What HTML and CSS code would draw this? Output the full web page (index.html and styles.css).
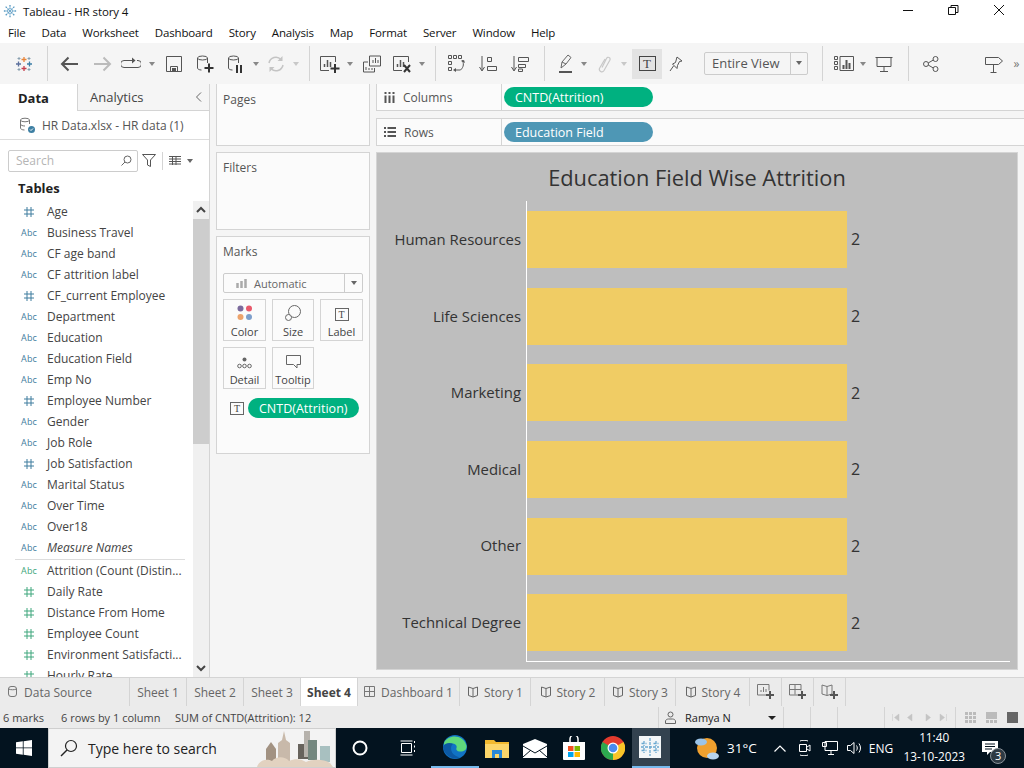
FILE: index.html
```html
<!DOCTYPE html>
<html lang="en">
<head>
    <meta charset="UTF-8">
    <title>Tableau - HR story 4</title>
    <link rel="stylesheet" href="styles.css">
</head>
<body>
    <svg class="defs" width="0" height="0">
        <symbol id="hash" viewBox="0 0 10 10"><path d="M3 0v10M7 0v10M0 3h10M0 7h10" fill="none" stroke="currentColor" stroke-width="1"/></symbol>
        <symbol id="book" viewBox="0 0 12 12"><path d="M6 2.5 1.5 1v8.5L6 11l4.5-1.5V1zM6 2.5V11" fill="none" stroke="currentColor"/></symbol>
    </svg>

    <!-- Title bar -->
    <div class="titlebar">
        <svg class="app-logo" width="14" height="14" viewBox="0 0 16 16"><path d="M8 1v14M1 8h14M3 3l10 10M13 3 3 13" stroke="#5b9cc4" stroke-width="1.5" stroke-dasharray="2 1"/></svg>
        <span class="app-title">Tableau - HR story 4</span>
        <div class="win-btns">
            <svg width="46" height="22" viewBox="0 0 46 22"><path d="M17 10.5h10" stroke="#111"/></svg>
            <svg width="46" height="22" viewBox="0 0 46 22"><path d="M16.5 7.5h7v7h-7zM19 7.5v-2h7v7h-2.500" fill="none" stroke="#111"/></svg>
            <svg width="46" height="22" viewBox="0 0 46 22"><path d="M16 5l10 10M26 5 16 15" stroke="#111"/></svg>
        </div>
    </div>

    <!-- Menu -->
    <div class="menubar">
        <span>File</span><span>Data</span><span>Worksheet</span><span>Dashboard</span><span>Story</span><span>Analysis</span><span>Map</span><span>Format</span><span>Server</span><span>Window</span><span>Help</span>
    </div>

    <!-- Toolbar -->
    <div class="toolbar">
        <div class="tool t32"><svg width="18" height="18" viewBox="0 0 18 18"><path d="M9 2v5M6.5 4.5h5" stroke="#e8853a" stroke-width="1.3"/><path d="M9 11v5M6.5 13.5h5" stroke="#c63f4d" stroke-width="1.3"/><path d="M3.5 6.500v5M1 9h5" stroke="#5b6f9c" stroke-width="1.3"/><path d="M14.500 6.500v5M12 9h5" stroke="#3c7ea6" stroke-width="1.3"/><path d="M4 2v3M2.5 3.500h3M14 2v3M12.500 3.500h3M4 13v3M2.500 14.500h3M14 13v3M12.500 14.500h3" stroke="#8aa0b0"/></svg></div>
        <div class="tool t14"><i class="sep"></i></div>
        <div class="tool t32"><svg width="20" height="16" viewBox="0 0 20 16"><path d="M18 8H2M8.5 1.5 2 8l6.5 6.5" fill="none" stroke="#555" stroke-width="2"/></svg></div>
        <div class="tool t32"><svg width="20" height="16" viewBox="0 0 20 16"><path d="M2 8h16M11.500 1.500 18 8l-6.500 6.500" fill="none" stroke="#bbb" stroke-width="2"/></svg></div>
        <div class="tool t26"><svg width="20" height="14" viewBox="0 0 20 14"><path d="M12 3.500H3a2.500 2.500 0 0 0 0 7h14a2.500 2.500 0 0 0 0-7h-1" fill="none" stroke="#555"/><path d="M11 .5 14.500 3.500 11 6.500z" fill="#555"/></svg></div>
        <div class="tool t16"><i class="caret"></i></div>
        <div class="tool t28"><svg width="16" height="16" viewBox="0 0 16 16"><path d="M.5.5h15v15H.5zM4.500 15.500v-5h7v5" fill="none" stroke="#555"/><path d="M6 12h4v3H6z" fill="#555"/></svg></div>
        <div class="tool t34"><svg width="18" height="18" viewBox="0 0 18 18"><ellipse cx="6.500" cy="3" rx="5" ry="2" fill="none" stroke="#555"/><path d="M1.500 3v10c0 1 1.500 2 4 2M11.500 3v5" fill="none" stroke="#555"/><path d="M13 8.500v9M8.500 13h9" stroke="#333" stroke-width="2"/></svg></div>
        <div class="tool t28"><svg width="18" height="18" viewBox="0 0 18 18"><ellipse cx="6.500" cy="3" rx="5" ry="2" fill="none" stroke="#555"/><path d="M1.500 3v10c0 1 1.500 2 4 2M11.500 3v5" fill="none" stroke="#555"/><path d="M9 10h2v8H9zM13 10h2v8h-2z" fill="#333"/></svg></div>
        <div class="tool t12"><i class="caret"></i></div>
        <div class="tool t28"><svg width="18" height="18" viewBox="0 0 18 18"><path d="M2 8a7 7 0 0 1 12-3.500M16 10a7 7 0 0 1-12 3.500" fill="none" stroke="#c4c4c4" stroke-width="1.5"/><path d="M15.500 1v5h-5zM2.500 17v-5h5z" fill="#c4c4c4"/></svg></div>
        <div class="tool t12"><i class="caret off"></i></div>
        <div class="tool t14"><i class="sep"></i></div>
        <div class="tool t28"><svg width="20" height="18" viewBox="0 0 20 18"><path d="M15.500 7V1.500H.5v14H9" fill="none" stroke="#555"/><path d="M4.500 12V9M7.500 12V5M10.500 12V7" stroke="#555" stroke-width="1.5"/><path d="M15 9v9M10.500 13.500h9" stroke="#333" stroke-width="2"/></svg></div>
        <div class="tool t12"><i class="caret"></i></div>
        <div class="tool t32"><svg width="18" height="18" viewBox="0 0 18 18"><path d="M6.500 1h11v10h-11zM.5 7H5M.5 7v10h11v-4" fill="none" stroke="#555"/><path d="M10 8V5M12.500 8V3M15 8V5M3 15v-3M6 15v-2M9 15v-2" stroke="#555"/></svg></div>
        <div class="tool t28"><svg width="18" height="18" viewBox="0 0 18 18"><path d="M15.500 7V1.500H.5v14H9" fill="none" stroke="#555"/><path d="M4.500 12V9M7.500 12V5M10.500 12V7" stroke="#555" stroke-width="1.5"/><path d="M11 10l6 7M17 10l-6 7" stroke="#333" stroke-width="2"/></svg></div>
        <div class="tool t12"><i class="caret"></i></div>
        <div class="tool t14"><i class="sep"></i></div>
        <div class="tool t30"><svg width="18" height="18" viewBox="0 0 18 18"><path d="M.5.5h3v3h-3zM5.500.5h3v3h-3zM10.500.5h3v3h-3zM.5 6.500h3v3h-3zM.5 12.500h3v3h-3zM14 5c2 3 2 7-1.500 10H7" fill="none" stroke="#555"/><path d="M8 13v4l-3-2zM13 6l3-1 1 3z" fill="#555"/></svg></div>
        <div class="tool t32"><svg width="18" height="16" viewBox="0 0 18 16"><path d="M3 0v14M.5 11 3 15l2.500-4" fill="none" stroke="#555"/><path d="M8.500 1.500h4v4h-4zM8.500 10.500h9v4h-9z" fill="none" stroke="#555"/></svg></div>
        <div class="tool t32"><svg width="18" height="16" viewBox="0 0 18 16"><path d="M3 0v14M.5 11 3 15l2.500-4" fill="none" stroke="#555"/><path d="M7.500 1.500h10v4h-10zM7.500 8.500h7v3h-7zM7.500 13h4v2.500h-4z" fill="none" stroke="#555"/></svg></div>
        <div class="tool t16"><i class="sep"></i></div>
        <div class="tool t28"><svg width="14" height="20" viewBox="0 0 14 20"><path d="M2 14 3 8 9 1l3 2.500L7 10l-5 4M3 8l4 2" fill="none" stroke="#666"/><path d="M0 18h13" stroke="#555" stroke-width="2"/></svg></div>
        <div class="tool t8"><i class="caret"></i></div>
        <div class="tool t32"><svg width="13" height="18" viewBox="0 0 13 18"><path d="M4 12.500 8.500 3.500c1.200-2.500 4.500-.8 3.300 1.700L6 15.500c-1.700 2.800-6 .5-4.300-2.500L7 4" fill="none" stroke="#c8c8c8" stroke-width="1.2"/></svg></div>
        <div class="tool t8"><i class="caret off"></i></div>
        <div class="tool t30 tool-on"><span class="t-box t-big">T</span></div>
        <div class="tool t28"><svg width="14" height="16" viewBox="0 0 14 16"><path d="M8 1l5 4-2.500.5-2 4-.5 3L3.500 8l3-1.500zM4.500 10 1 15" fill="none" stroke="#555"/></svg></div>
        <div class="view-select"><span class="view-label">Entire View</span><span class="view-arrow"><i class="caret dark"></i></span></div>
        <div class="tool t14"><i class="sep"></i></div>
        <div class="tool t30"><svg width="20" height="15" viewBox="0 0 20 15"><path d="M.5.5h3v3h-3zM.5 5.500h3v3h-3zM.5 10.500h3v3h-3zM6 .5h13.500v14H6z" fill="none" stroke="#555"/><path d="M9.500 13V9M12.500 13V4M15.500 13V7" stroke="#555" stroke-width="2"/></svg></div>
        <div class="tool t8"><i class="caret"></i></div>
        <div class="tool t34"><svg width="18" height="16" viewBox="0 0 18 16"><path d="M.5 1.500h17M2 1.500v9h14v-9M9 10.500V15M5 15.500h8" fill="none" stroke="#555"/></svg></div>
        <div class="tool t14"><i class="sep"></i></div>
        <div class="tool t32"><svg width="16" height="16" viewBox="0 0 16 16"><circle cx="3" cy="8" r="2.500" fill="none" stroke="#555"/><circle cx="12.500" cy="3" r="2.500" fill="none" stroke="#555"/><circle cx="12.500" cy="13" r="2.500" fill="none" stroke="#555"/><path d="M5.200 7 10.300 4M5.200 9l5.100 3" stroke="#555"/></svg></div>
        <div class="tool t32 push"><svg width="18" height="18" viewBox="0 0 18 18"><path d="M.5 2.500h13l4 3.500-4 3.500H.5zM8.500 9.500V17M5.500 17.500h6" fill="none" stroke="#555"/></svg></div>
        <span class="more">&raquo;</span>
    </div>

    <!-- Main area -->
    <div class="main">
        <div class="data-pane">
            <div class="pane-tabs">
                <div class="pane-tab active">Data</div>
                <div class="pane-tab">Analytics<svg class="collapse" width="7" height="10" viewBox="0 0 7 10"><path d="M6 .5 1.500 5 6 9.500" fill="none" stroke="#666"/></svg></div>
            </div>
            <div class="source">
                <svg width="17" height="17" viewBox="0 0 17 17"><ellipse cx="6" cy="3" rx="4.500" ry="1.800" fill="none" stroke="#777"/><path d="M1.500 3v8c0 1 1.500 2 4 2M10.500 3v4M1.500 7c0 1.200 2 2 4.500 2" fill="none" stroke="#777"/><circle cx="12.500" cy="12.500" r="3.500" fill="#3d7fa3"/><path d="M11 12.500l1 1 2-2" fill="none" stroke="#fff"/></svg>
                <span>HR Data.xlsx - HR data (1)</span>
            </div>
            <div class="search-row">
                <div class="search"><span>Search</span><svg width="11" height="11" viewBox="0 0 11 11"><circle cx="6.500" cy="4.500" r="3.500" fill="none" stroke="#666"/><path d="M4 7 .5 10.500" stroke="#666"/></svg></div>
                <svg class="filter" width="14" height="13" viewBox="0 0 14 13"><path d="M.5.5h13L8.500 6v6.500l-3-1.500V6z" fill="none" stroke="#555"/></svg>
                <i class="search-sep"></i>
                <svg width="12" height="9" viewBox="0 0 12 9"><path d="M0 .5h12M0 3h12M0 5.500h12M0 8h12M3.500 0v9M7 0v9" stroke="#555"/></svg>
                <i class="caret dark list-caret"></i>
            </div>
            <div class="tables-head">Tables</div>
            <div class="field-area">
                <div class="fields">
                    <div class="field"><span class="ico blue"><svg width="10" height="10"><use href="#hash"/></svg></span>Age</div>
                    <div class="field"><span class="ico blue">Abc</span>Business Travel</div>
                    <div class="field"><span class="ico blue">Abc</span>CF age band</div>
                    <div class="field"><span class="ico blue">Abc</span>CF attrition label</div>
                    <div class="field"><span class="ico blue"><svg width="10" height="10"><use href="#hash"/></svg></span>CF_current Employee</div>
                    <div class="field"><span class="ico blue">Abc</span>Department</div>
                    <div class="field"><span class="ico blue">Abc</span>Education</div>
                    <div class="field"><span class="ico blue">Abc</span>Education Field</div>
                    <div class="field"><span class="ico blue">Abc</span>Emp No</div>
                    <div class="field"><span class="ico blue"><svg width="10" height="10"><use href="#hash"/></svg></span>Employee Number</div>
                    <div class="field"><span class="ico blue">Abc</span>Gender</div>
                    <div class="field"><span class="ico blue">Abc</span>Job Role</div>
                    <div class="field"><span class="ico blue"><svg width="10" height="10"><use href="#hash"/></svg></span>Job Satisfaction</div>
                    <div class="field"><span class="ico blue">Abc</span>Marital Status</div>
                    <div class="field"><span class="ico blue">Abc</span>Over Time</div>
                    <div class="field"><span class="ico blue">Abc</span>Over18</div>
                    <div class="field"><span class="ico blue">Abc</span><em>Measure Names</em></div>
                    <div class="field-rule"></div>
                    <div class="field"><span class="ico green">Abc</span>Attrition (Count (Distin...</div>
                    <div class="field"><span class="ico green"><svg width="10" height="10"><use href="#hash"/></svg></span>Daily Rate</div>
                    <div class="field"><span class="ico green"><svg width="10" height="10"><use href="#hash"/></svg></span>Distance From Home</div>
                    <div class="field"><span class="ico green"><svg width="10" height="10"><use href="#hash"/></svg></span>Employee Count</div>
                    <div class="field"><span class="ico green"><svg width="10" height="10"><use href="#hash"/></svg></span>Environment Satisfacti...</div>
                    <div class="field"><span class="ico green"><svg width="10" height="10"><use href="#hash"/></svg></span>Hourly Rate</div>
                </div>
                <div class="scrollbar">
                    <svg class="scroll-arrow" width="16" height="18" viewBox="0 0 16 18"><path d="M4 11l4-4 4 4" fill="none" stroke="#444" stroke-width="2"/></svg>
                    <div class="scroll-thumb"></div>
                    <svg class="scroll-arrow end" width="16" height="18" viewBox="0 0 16 18"><path d="M4 7l4 4 4-4" fill="none" stroke="#444" stroke-width="2"/></svg>
                </div>
            </div>
        </div>

        <div class="cards">
            <div class="card pages">Pages</div>
            <div class="card filters">Filters</div>
            <div class="card marks">
                <div class="marks-title">Marks</div>
                <div class="mark-select">
                    <svg width="12" height="10" viewBox="0 0 12 10"><path d="M1.500 10V5M5.500 10V3M9.500 10V1" stroke="#aaa" stroke-width="2.5"/></svg>
                    <span>Automatic</span>
                    <span class="mark-arrow"><i class="caret dark"></i></span>
                </div>
                <div class="mark-grid">
                    <div class="mark-btn"><svg width="16" height="16" viewBox="0 0 16 16"><circle cx="3.500" cy="3.500" r="3" fill="#7b6a9c"/><circle cx="12" cy="3.500" r="3" fill="#e8596b"/><circle cx="3.500" cy="12" r="3" fill="#eda36c"/><circle cx="12" cy="12" r="3" fill="#7d9fcb"/></svg><span>Color</span></div>
                    <div class="mark-btn"><svg width="16" height="16" viewBox="0 0 16 16"><circle cx="9.500" cy="6.500" r="6" fill="none" stroke="#666"/><circle cx="3.500" cy="12.500" r="3" fill="#fbfbfb" stroke="#666"/></svg><span>Size</span></div>
                    <div class="mark-btn"><span class="t-box">T</span><span>Label</span></div>
                    <div class="mark-btn"><svg width="15" height="12" viewBox="0 0 15 12"><circle cx="7.500" cy="2.500" r="2" fill="#666"/><circle cx="2.500" cy="9" r="1.800" fill="none" stroke="#666"/><circle cx="7.500" cy="9" r="1.800" fill="none" stroke="#666"/><circle cx="12.500" cy="9" r="1.800" fill="none" stroke="#666"/></svg><span>Detail</span></div>
                    <div class="mark-btn"><svg width="15" height="14" viewBox="0 0 15 14"><path d="M.5.5h14v9h-3.500v3.500L7.500 9.500H.5z" fill="none" stroke="#666"/></svg><span>Tooltip</span></div>
                </div>
                <div class="mark-pill-row">
                    <span class="t-box">T</span>
                    <span class="pill green-pill">CNTD(Attrition)</span>
                </div>
            </div>
        </div>

        <div class="sheet">
            <div class="shelf">
                <div class="shelf-name"><svg width="11" height="11" viewBox="0 0 11 11"><path d="M1.500 0v2M5.500 0v2M9.500 0v2M1.500 3.500V11M5.500 3.500V11M9.500 3.500V11" stroke="#555" stroke-width="2"/></svg>Columns</div>
                <div class="shelf-body"><span class="pill green-pill wide">CNTD(Attrition)</span></div>
            </div>
            <div class="shelf">
                <div class="shelf-name"><svg width="12" height="10" viewBox="0 0 12 10"><path d="M0 1h2M3.500 1H12M0 5h2M3.500 5H12M0 9h2M3.500 9H12" stroke="#555" stroke-width="2"/></svg>Rows</div>
                <div class="shelf-body"><span class="pill blue-pill wide">Education Field</span></div>
            </div>
            <div class="viz">
                <h1>Education Field Wise Attrition</h1>
                <div class="chart">
                    <div class="labels">
                        <div>Human Resources</div>
                        <div>Life Sciences</div>
                        <div>Marketing</div>
                        <div>Medical</div>
                        <div>Other</div>
                        <div>Technical Degree</div>
                    </div>
                    <div class="plot">
                        <div class="row"><div class="bar"></div><span>2</span></div>
                        <div class="row"><div class="bar"></div><span>2</span></div>
                        <div class="row"><div class="bar"></div><span>2</span></div>
                        <div class="row"><div class="bar"></div><span>2</span></div>
                        <div class="row"><div class="bar"></div><span>2</span></div>
                        <div class="row"><div class="bar"></div><span>2</span></div>
                    </div>
                </div>
            </div>
        </div>
    </div>

    <!-- Sheet tabs -->
    <div class="tabs">
        <div class="tab tab-source"><svg width="10" height="12" viewBox="0 0 10 12"><rect x=".5" y=".5" width="8" height="10" rx="2.500" fill="none" stroke="#777"/><path d="M.5 3c2 1 6 1 8 0" fill="none" stroke="#777"/></svg>Data Source</div>
        <div class="tab tab-sheet">Sheet 1</div>
        <div class="tab tab-sheet">Sheet 2</div>
        <div class="tab tab-sheet">Sheet 3</div>
        <div class="tab tab-sheet current">Sheet 4</div>
        <div class="tab tab-dash"><svg width="12" height="12" viewBox="0 0 12 12"><path d="M.5.5h10v10H.5zM.5 5.500h10M5.500.5v10" fill="none" stroke="#777"/></svg>Dashboard 1</div>
        <div class="tab tab-story"><svg width="12" height="12"><use href="#book"/></svg>Story 1</div>
        <div class="tab tab-story wide-story"><svg width="12" height="12"><use href="#book"/></svg>Story 2</div>
        <div class="tab tab-story"><svg width="12" height="12"><use href="#book"/></svg>Story 3</div>
        <div class="tab tab-story wide-story"><svg width="12" height="12"><use href="#book"/></svg>Story 4</div>
        <div class="tab tab-new"><svg width="18" height="16" viewBox="0 0 18 16"><path d="M10 11H.5V.5H12v6" fill="none" stroke="#777"/><path d="M4 8V6M6.500 8V3M9 8V5" stroke="#777"/><path d="M13 7v8M9 11h8" stroke="#555" stroke-width="2"/></svg></div>
        <div class="tab tab-new"><svg width="18" height="16" viewBox="0 0 18 16"><path d="M10 11H.5V.5H12v6M.5 5.500H12M6 .5v10" fill="none" stroke="#777"/><path d="M13 7v8M9 11h8" stroke="#555" stroke-width="2"/></svg></div>
        <div class="tab tab-new"><svg width="18" height="16" viewBox="0 0 18 16"><path d="M6 2.500 1 1v9l5 1.500L11 10V1zM6 2.500v9" fill="none" stroke="#777"/><path d="M13 7v8M9 11h8" stroke="#555" stroke-width="2"/></svg></div>
    </div>

    <!-- Status bar -->
    <div class="status">
        <span class="status-marks">6 marks</span>
        <span class="status-rows">6 rows by 1 column</span>
        <span>SUM of CNTD(Attrition): 12</span>
        <div class="status-user">
            <svg width="11" height="13" viewBox="0 0 11 13"><circle cx="5.500" cy="3.500" r="2.500" fill="none" stroke="#666"/><path d="M.5 12.500V10c0-1 1.500-2 3-2h4c1.500 0 3 1 3 2v2.500z" fill="none" stroke="#666"/></svg>
            <span>Ramya N</span>
            <i class="caret black"></i>
        </div>
        <div class="status-cell c27"></div>
        <div class="status-cell c27"></div>
        <div class="status-cell c47"></div>
        <div class="status-cell nav">
            <svg width="56" height="9" viewBox="0 0 56 9"><path d="M.5 1v7M7 1 2.500 4.500 7 8zM20 1l-4.500 3.500L20 8zM34 1l4.500 3.500L34 8zM48 1l4.500 3.500L48 8zM54.500 1v7" fill="#c4c4c4" stroke="#c4c4c4" stroke-width=".5"/></svg>
        </div>
        <div class="status-views">
            <svg width="11" height="11" viewBox="0 0 11 11"><path d="M0 0h3v3H0zM4 0h3v3H4zM8 0h3v3H8zM0 4h3v3H0zM4 4h3v3H4zM8 4h3v3H8zM0 8h3v3H0zM4 8h3v3H4zM8 8h3v3H8z" fill="#bbb"/></svg>
            <svg width="11" height="11" viewBox="0 0 11 11"><path d="M0 0h11v7H0zM0 8h3v3H0zM4 8h3v3H4zM8 8h3v3H8z" fill="#bbb"/></svg>
            <svg width="11" height="11" viewBox="0 0 11 11"><path d="M0 0h11v11H0z" fill="#666"/></svg>
        </div>
    </div>

    <!-- Windows taskbar -->
    <div class="taskbar">
        <div class="start"><svg width="16" height="16" viewBox="0 0 16 16"><path d="M0 2.300 6.800 1.300v6.200H0zM7.600 1.200 16 0v7.500H7.600zM0 8.300h6.800v6.400L0 13.700zM7.600 8.300H16V16l-8.400-1.200z" fill="#fff"/></svg></div>
        <div class="winsearch">
            <svg width="18" height="18" viewBox="0 0 18 18"><circle cx="11" cy="7" r="5.500" fill="none" stroke="#222" stroke-width="1.2"/><path d="M7 11 1 17" stroke="#222" stroke-width="1.5"/></svg>
            <span>Type here to search</span>
            <svg class="city" width="80" height="38" viewBox="0 0 80 38"><path d="M11 20l5-7 5 7v18H11z" fill="#a29282"/><path d="M23 14l4-3 2-9 2 9 4 3v24H23z" fill="#c8b9aa"/><path d="M43 15h10v15H43z" fill="#67635d"/><path d="M49 2h6v26h-6z" fill="#b6b2ac"/><path d="M53 11h9v20h-9z" fill="#74877f"/><path d="M65 17h10v16H65z" fill="#a8c0c0"/><path d="M2 38c2-7 10-9 15-6 4-5 13-5 17 0 6-3 13-2 17 1 6-3 18-3 24 1l3 4z" fill="#e2d2c0"/></svg>
        </div>
        <div class="tb-icon w48"><svg width="16" height="16" viewBox="0 0 16 16"><circle cx="8" cy="8" r="6.500" fill="none" stroke="#fff" stroke-width="2"/></svg></div>
        <div class="tb-icon w47"><svg width="16" height="16" viewBox="0 0 16 16"><path d="M1.500 3.500h10v9h-10zM.5 1h12M.5 15h12M14.500 1v2M14.500 5.500v2M14.500 10v2" fill="none" stroke="#fff"/></svg></div>
        <div class="tb-icon w48 running">
            <svg width="24" height="24" viewBox="0 0 24 24"><circle cx="12" cy="12" r="12" fill="#1173c5"/><path d="M1 8C4 0 20-2 23.500 11c.5 4-3 6-7 5.500-3-.5-3.500-2-3-3.500 1-3-2-5-5-4.500C5 9 2 12 2 15z" fill="#5fd97c"/><path d="M0 12c1-4 7-5 10-3-3 2-3 9 3 12 1 .5 2 1 4 1-6 4-16-1-17-10z" fill="#0c59a4"/></svg>
        </div>
        <div class="tb-icon w36"><svg width="24" height="20" viewBox="0 0 24 20"><path d="M0 2h9l2 2h13v16H0z" fill="#f2b92f"/><path d="M0 6h24v14H0z" fill="#fcd66a"/><path d="M7 12h10v8h-3v-4h-4v4H7z" fill="#2a88d8"/></svg></div>
        <div class="tb-icon w39"><svg width="24" height="19" viewBox="0 0 24 19"><path d="M0 5 12 0l12 5v14H0z" fill="#fff"/><path d="M0 7l12 7 12-7M0 18l8-7M24 18l-8-7" fill="none" stroke="#03131f"/></svg></div>
        <div class="tb-icon w39"><svg width="24" height="24" viewBox="0 0 24 24"><path d="M1 6h22v17a1 1 0 0 1-1 1H2a1 1 0 0 1-1-1z" fill="#fff"/><path d="M8 6V3a4 4 0 0 1 8 0v3" fill="none" stroke="#fff" stroke-width="1.5"/><path d="M6 10h5.500v5H6z" fill="#f25022"/><path d="M12.500 10H18v5h-5.500z" fill="#7fba00"/><path d="M6 16h5.500v5H6z" fill="#00a4ef"/><path d="M12.500 16H18v5h-5.500z" fill="#ffb900"/></svg></div>
        <div class="tb-icon w39"><svg width="24" height="24" viewBox="0 0 24 24"><circle cx="12" cy="12" r="12" fill="#e33b2e"/><path d="M12 12 22.500 6A12 12 0 0 1 12 24z" fill="#f8c528"/><path d="M12 12 12 24A12 12 0 0 1 1.500 6z" fill="#2da94f"/><circle cx="12" cy="12" r="5.500" fill="#fff"/><circle cx="12" cy="12" r="4.300" fill="#4a8bf0"/></svg></div>
        <div class="tb-icon w38 active-app"><div class="tile"><svg width="20" height="20" viewBox="0 0 20 20"><path d="M10 1v18M1 10h18M4 4v5M1.500 6.500h5M16 4v5M13.500 6.500h5M4 11v5M1.500 13.500h5M16 11v5M13.500 13.500h5" stroke="#6aa8d0" stroke-width="1.3" stroke-dasharray="3 1"/></svg></div></div>
        <div class="tray">
            <svg class="weather" width="26" height="24" viewBox="0 0 26 24"><circle cx="13" cy="12" r="10" fill="#f0a02e"/><ellipse cx="7" cy="6" rx="6" ry="3.500" fill="#9cc4e8"/><ellipse cx="19" cy="20" rx="6" ry="3.500" fill="#b8d4ee"/></svg>
            <span class="temp">31°C</span>
            <svg class="tray-ico chev" width="12" height="7" viewBox="0 0 12 7"><path d="M.5 6.500 6 1l5.500 5.500" fill="none" stroke="#fff" stroke-width="1.2"/></svg>
            <svg class="tray-ico meet" width="12" height="16" viewBox="0 0 12 16"><path d="M1 1c2-1 6-1 8 0M1 15c2 1 6 1 8 0M.5 4.500h7v7h-7zM8 7l3-2v6L8 9" fill="none" stroke="#fff"/></svg>
            <svg class="tray-ico net" width="16" height="14" viewBox="0 0 16 14"><path d="M3 .5h12.500v9H3zM9 9.500V13M6 13.500h6M.5 1.500h4v4h-4z" fill="#03131f" stroke="#fff"/></svg>
            <svg class="tray-ico vol" width="16" height="14" viewBox="0 0 16 14"><path d="M.5 4.500h3L7 1.500v11l-3.500-3h-3zM9.500 4.500c1 1.500 1 3.500 0 5M12 2.500c2 3 2 6 0 9" fill="none" stroke="#fff"/></svg>
            <span class="lang">ENG</span>
            <div class="clock"><div>11:40</div><div>13-10-2023</div></div>
            <div class="notif">
                <svg width="16" height="14" viewBox="0 0 16 14"><path d="M0 0h16v11H8l-3 3v-3H0z" fill="#fff"/><path d="M3 3h10M3 5.500h10M3 8h7" stroke="#03131f"/></svg>
                <span class="badge">3</span>
            </div>
        </div>
    </div>
</body>
</html>
```

FILE: styles.css
```css
* {
    box-sizing: border-box;
}
html, body {
    margin: 0;
    padding: 0;
}
body {
    width: 1024px;
    height: 768px;
    overflow: hidden;
    font-family: "Open Sans", sans-serif;
    font-size: 12px;
    color: #333;
    background-color: #fff;
    display: flex;
    flex-direction: column;
}
.defs {
    position: absolute;
}
svg {
    display: block;
    flex: none;
}

/* Title bar + menu */
.titlebar {
    height: 22px;
    display: flex;
    align-items: center;
    padding-left: 2px;
    flex: none;
}
.app-logo {
    margin-left: 1px;
}
.app-title {
    margin-left: 6px;
    color: #111;
    font-size: 11.5px;
    letter-spacing: -.1px;
}
.win-btns {
    display: flex;
    margin-left: auto;
}
.menubar {
    height: 21px;
    display: flex;
    gap: 16px;
    align-items: center;
    padding-left: 8px;
    font-size: 11.5px;
    letter-spacing: -.15px;
    color: #111;
    flex: none;
}

/* Toolbar */
.toolbar {
    height: 41px;
    display: flex;
    align-items: center;
    background-color: #f5f5f5;
    padding-left: 8px;
    flex: none;
}
.tool {
    height: 30px;
    display: flex;
    align-items: center;
    justify-content: center;
    flex: none;
}
.t8 { width: 8px; }
.t12 { width: 12px; }
.t14 { width: 14px; }
.t16 { width: 16px; }
.t26 { width: 26px; }
.t28 { width: 28px; }
.t30 { width: 30px; }
.t32 { width: 32px; }
.t34 { width: 34px; }
.push {
    margin-left: 31px;
}
.tool-on {
    background-color: #e3e3e3;
    margin-left: 4px;
}
.sep {
    display: block;
    width: 1px;
    height: 35px;
    background-color: #d4d4d4;
}
.caret {
    display: block;
    width: 0;
    height: 0;
    border-left: 3.5px solid transparent;
    border-right: 3.5px solid transparent;
    border-top: 4px solid #888;
}
.caret.off {
    border-top-color: #c8c8c8;
}
.caret.dark {
    border-top-color: #666;
}
.caret.black {
    border-left-width: 4px;
    border-right-width: 4px;
    border-top-color: #222;
}
.t-box {
    display: flex;
    align-items: center;
    justify-content: center;
    width: 14px;
    height: 13px;
    border: 1px solid #666;
    font-family: "Liberation Serif", serif;
    font-size: 10px;
    color: #444;
    flex: none;
}
.t-big {
    width: 17px;
    height: 15px;
    border-color: #444;
    font-size: 13px;
}
.view-select {
    display: flex;
    width: 104px;
    height: 23px;
    margin-left: 14px;
    margin-right: 7px;
    margin-top: -1px;
    border: 1px solid #ccc;
    border-radius: 2px;
    align-items: center;
    font-size: 13px;
    color: #555;
    flex: none;
}
.view-label {
    width: 85px;
    padding-left: 7px;
}
.view-arrow {
    height: 100%;
    flex: 1;
    border-left: 1px solid #ccc;
    display: flex;
    align-items: center;
    justify-content: center;
}
.more {
    width: 13px;
    text-align: center;
    color: #777;
    font-size: 12px;
}

/* Main area */
.main {
    height: 593px;
    display: flex;
    background-color: #f5f5f5;
    flex: none;
}
.data-pane {
    width: 210px;
    background-color: #fff;
    border-right: 1px solid #d4d4d4;
    display: flex;
    flex-direction: column;
    flex: none;
}
.pane-tabs {
    height: 27px;
    display: flex;
    flex: none;
}
.pane-tab {
    height: 27px;
    display: flex;
    align-items: center;
    font-size: 13px;
    color: #444;
    background-color: #f5f5f5;
    border-bottom: 1px solid #d4d4d4;
    border-left: 1px solid #d4d4d4;
    padding-left: 12px;
    flex: 1;
}
.pane-tab.active {
    flex: 0 0 77px;
    padding-left: 18px;
    font-weight: 700;
    color: #222;
    background-color: #fff;
    border: none;
}
.collapse {
    margin-left: auto;
    margin-right: 7px;
}
.source {
    height: 29px;
    display: flex;
    align-items: center;
    gap: 6px;
    padding-left: 19px;
    color: #555;
    border-bottom: 1px solid #ddd;
    flex: none;
}
.search-row {
    height: 41px;
    display: flex;
    align-items: center;
    padding: 0 0 0 8px;
    flex: none;
}
.search {
    width: 130px;
    height: 22px;
    border: 1px solid #ccc;
    border-radius: 2px;
    display: flex;
    align-items: center;
    justify-content: space-between;
    padding: 0 5px 0 7px;
    color: #b5b5b5;
}
.filter {
    margin-left: 4px;
}
.search-sep {
    display: block;
    width: 1px;
    height: 18px;
    background-color: #d4d4d4;
    margin: 0 6px;
}
.list-caret {
    margin-left: 6px;
}
.tables-head {
    height: 22px;
    padding: 0 0 4px 18px;
    margin-top: -2px;
    font-weight: 700;
    font-size: 13px;
    color: #222;
    flex: none;
}
.field-area {
    flex: 1;
    display: flex;
    min-height: 0;
    overflow: hidden;
}
.fields {
    flex: 1;
    overflow: hidden;
    padding-left: 15px;
}
.field {
    height: 21px;
    display: flex;
    align-items: center;
    white-space: nowrap;
    color: #444;
}
.field em {
    color: #444;
}
.ico {
    width: 32px;
    flex: none;
    padding-left: 6px;
    font-size: 9px;
    letter-spacing: .2px;
    display: flex;
    align-items: center;
}
.ico svg {
    margin-left: 3px;
}
.blue {
    color: #3f7d9e;
}
.green {
    color: #3ea67c;
}
.field-rule {
    height: 1px;
    background-color: #ddd;
    margin: 1px 8px 0 0;
}
.scrollbar {
    width: 16px;
    background-color: #f0f0f0;
    display: flex;
    flex-direction: column;
    flex: none;
}
.scroll-arrow {
    flex: none;
}
.scroll-arrow.end {
    margin-top: auto;
}
.scroll-thumb {
    height: 225px;
    background-color: #cdcdcd;
}

/* Cards */
.cards {
    width: 154px;
    margin-left: 6px;
    display: flex;
    flex-direction: column;
    gap: 6px;
    flex: none;
}
.card {
    background-color: #fbfbfb;
    border: 1px solid #d4d4d4;
    padding: 6px 6px;
    color: #555;
}
.pages {
    height: 62px;
    padding-top: 7px;
    border-top: none;
}
.filters {
    height: 78px;
}
.marks {
    height: 218px;
}
.marks-title {
    height: 30px;
}
.mark-select {
    width: 140px;
    height: 20px;
    border: 1px solid #ccc;
    border-radius: 2px;
    display: flex;
    align-items: center;
    padding-left: 12px;
    gap: 6px;
    font-size: 11px;
    color: #666;
}
.mark-arrow {
    margin-left: auto;
    width: 18px;
    height: 100%;
    border-left: 1px solid #ccc;
    display: flex;
    align-items: center;
    justify-content: center;
}
.mark-grid {
    display: grid;
    grid-template-columns: 43px 42px 43px;
    grid-auto-rows: 42px;
    gap: 6px;
    margin-top: 6px;
}
.mark-btn {
    border: 1px solid #d4d4d4;
    display: flex;
    flex-direction: column;
    align-items: center;
    justify-content: flex-end;
    gap: 3px;
    padding-bottom: 1px;
    font-size: 11px;
    color: #444;
}
.mark-pill-row {
    display: flex;
    align-items: center;
    gap: 4px;
    margin-top: 9px;
    padding-left: 7px;
}
.pill {
    display: flex;
    align-items: center;
    height: 20px;
    border-radius: 10px;
    color: #fff;
    padding-left: 11px;
    font-size: 12.5px;
    flex: none;
}
.green-pill {
    background-color: #00b180;
    width: 111px;
}
.blue-pill {
    background-color: #4e97b5;
}
.pill.wide {
    width: 149px;
}

/* Shelves + viz */
.sheet {
    flex: 1;
    margin-left: 6px;
    display: flex;
    flex-direction: column;
    min-width: 0;
}
.shelf {
    height: 28px;
    background-color: #fbfbfb;
    border: 1px solid #d4d4d4;
    border-right: none;
    display: flex;
    margin-bottom: 6px;
    flex: none;
}
.shelf:first-child {
    height: 27px;
    margin-bottom: 7px;
    border-top: none;
}
.shelf-name {
    width: 125px;
    border-right: 1px solid #d4d4d4;
    display: flex;
    align-items: center;
    gap: 8px;
    padding-left: 7px;
    color: #555;
}
.shelf-body {
    display: flex;
    align-items: center;
    padding-left: 2px;
}
.viz {
    width: 642px;
    height: 518px;
    background-color: #bebebe;
    border: 1px solid #d4d4d4;
    display: flex;
    flex-direction: column;
    flex: none;
}
.viz h1 {
    height: 48px;
    margin: 0;
    font-size: 21.8px;
    font-weight: 500;
    color: #333;
    text-align: center;
    line-height: 50px;
    white-space: nowrap;
    flex: none;
}
.chart {
    height: 461px;
    display: flex;
    flex: none;
}
.labels {
    width: 144px;
    display: flex;
    flex-direction: column;
    padding-bottom: 2px;
    flex: none;
}
.labels div {
    flex: 1;
    display: flex;
    align-items: center;
    justify-content: flex-end;
    font-size: 14.9px;
    font-weight: 500;
    white-space: nowrap;
    color: #333;
}
.plot {
    width: 484px;
    margin-left: 5px;
    border-left: 1px solid #fff;
    border-bottom: 1px solid #fff;
    display: flex;
    flex-direction: column;
    flex: none;
}
.row {
    flex: 1;
    display: flex;
    align-items: center;
    gap: 4px;
    font-size: 16px;
    color: #333;
}
.bar {
    width: 320px;
    height: 57px;
    background-color: #f0cc64;
}

/* Sheet tabs */
.tabs {
    height: 30px;
    display: flex;
    background-color: #ebebeb;
    border-top: 1px solid #d4d4d4;
    padding-bottom: 1px;
    flex: none;
}
.tab {
    display: flex;
    align-items: center;
    justify-content: center;
    gap: 5px;
    border-right: 1px solid #d4d4d4;
    color: #666;
    white-space: nowrap;
    flex: none;
}
.tab-source { width: 130px; justify-content: flex-start; padding-left: 8px; gap: 6px; }
.tab-sheet { width: 57px; }
.tab-dash { width: 102px; }
.tab-story { width: 71px; }
.wide-story { width: 74px; }
.tab-new { width: 32px; }
.tab.current {
    background-color: #fff;
    font-weight: 700;
    color: #444;
}

/* Status bar */
.status {
    height: 21px;
    display: flex;
    align-items: center;
    background-color: #ebebeb;
    font-size: 11px;
    color: #444;
    padding-left: 3px;
    flex: none;
}
.status-marks {
    width: 58px;
}
.status-rows {
    width: 114px;
}
.status-user {
    margin-left: auto;
    width: 126px;
    height: 100%;
    display: flex;
    align-items: center;
    padding-left: 6px;
    gap: 9px;
    border-left: 1px solid #d4d4d4;
    border-right: 1px solid #d4d4d4;
    color: #222;
}
.status-user .caret {
    margin-left: auto;
    margin-right: 7px;
}
.status-cell {
    height: 100%;
    border-right: 1px solid #d4d4d4;
    flex: none;
}
.c27 { width: 27px; }
.c47 { width: 47px; }
.nav {
    width: 71px;
    display: flex;
    align-items: center;
    justify-content: center;
}
.status-views {
    width: 68px;
    display: flex;
    align-items: center;
    gap: 10px;
    padding-left: 9px;
}

/* Windows taskbar */
.taskbar {
    height: 40px;
    display: flex;
    background-color: #03131f;
    color: #fff;
    flex: none;
}
.start {
    width: 48px;
    display: flex;
    align-items: center;
    justify-content: center;
    flex: none;
}
.winsearch {
    width: 288px;
    background-color: #f3f3f3;
    border: 1px solid #cfcfcf;
    display: flex;
    align-items: center;
    padding-left: 11px;
    color: #222;
    font-size: 14px;
    flex: none;
}
.winsearch span {
    margin-left: 10px;
}
.city {
    margin-left: auto;
}
.tb-icon {
    height: 40px;
    display: flex;
    align-items: center;
    justify-content: center;
    flex: none;
}
.w36 { width: 36px; }
.w38 { width: 38px; }
.w39 { width: 39px; }
.w47 { width: 47px; }
.w48 { width: 48px; }
.running {
    border-bottom: 2px solid #76b9ed;
}
.active-app {
    background-color: #33424f;
    border-bottom: 2px solid #76b9ed;
}
.tile {
    width: 22px;
    height: 22px;
    margin-right: 3px;
    background-color: #f3f6f8;
    display: flex;
    align-items: center;
    justify-content: center;
}
.tray {
    display: flex;
    align-items: center;
    margin-left: 24px;
    flex: 1;
    min-width: 0;
}
.temp {
    margin-left: 7px;
    font-size: 13.5px;
    white-space: nowrap;
}
.chev { margin-left: 17px; }
.meet { margin-left: 13px; }
.net { margin-left: 11px; }
.vol { margin-left: 9px; }
.lang {
    margin-left: 6px;
    font-size: 12px;
}
.clock {
    margin-left: 9px;
    margin-top: -2px;
    width: 64px;
    text-align: center;
    font-size: 11.8px;
    line-height: 19px;
    white-space: nowrap;
}
.notif {
    margin-left: 16px;
    position: relative;
}
.badge {
    position: absolute;
    left: 8px;
    top: 7px;
    width: 16px;
    height: 16px;
    border-radius: 50%;
    background-color: #2e3a44;
    border: 1px solid #8a9299;
    font-size: 11px;
    line-height: 14px;
    text-align: center;
}
```
